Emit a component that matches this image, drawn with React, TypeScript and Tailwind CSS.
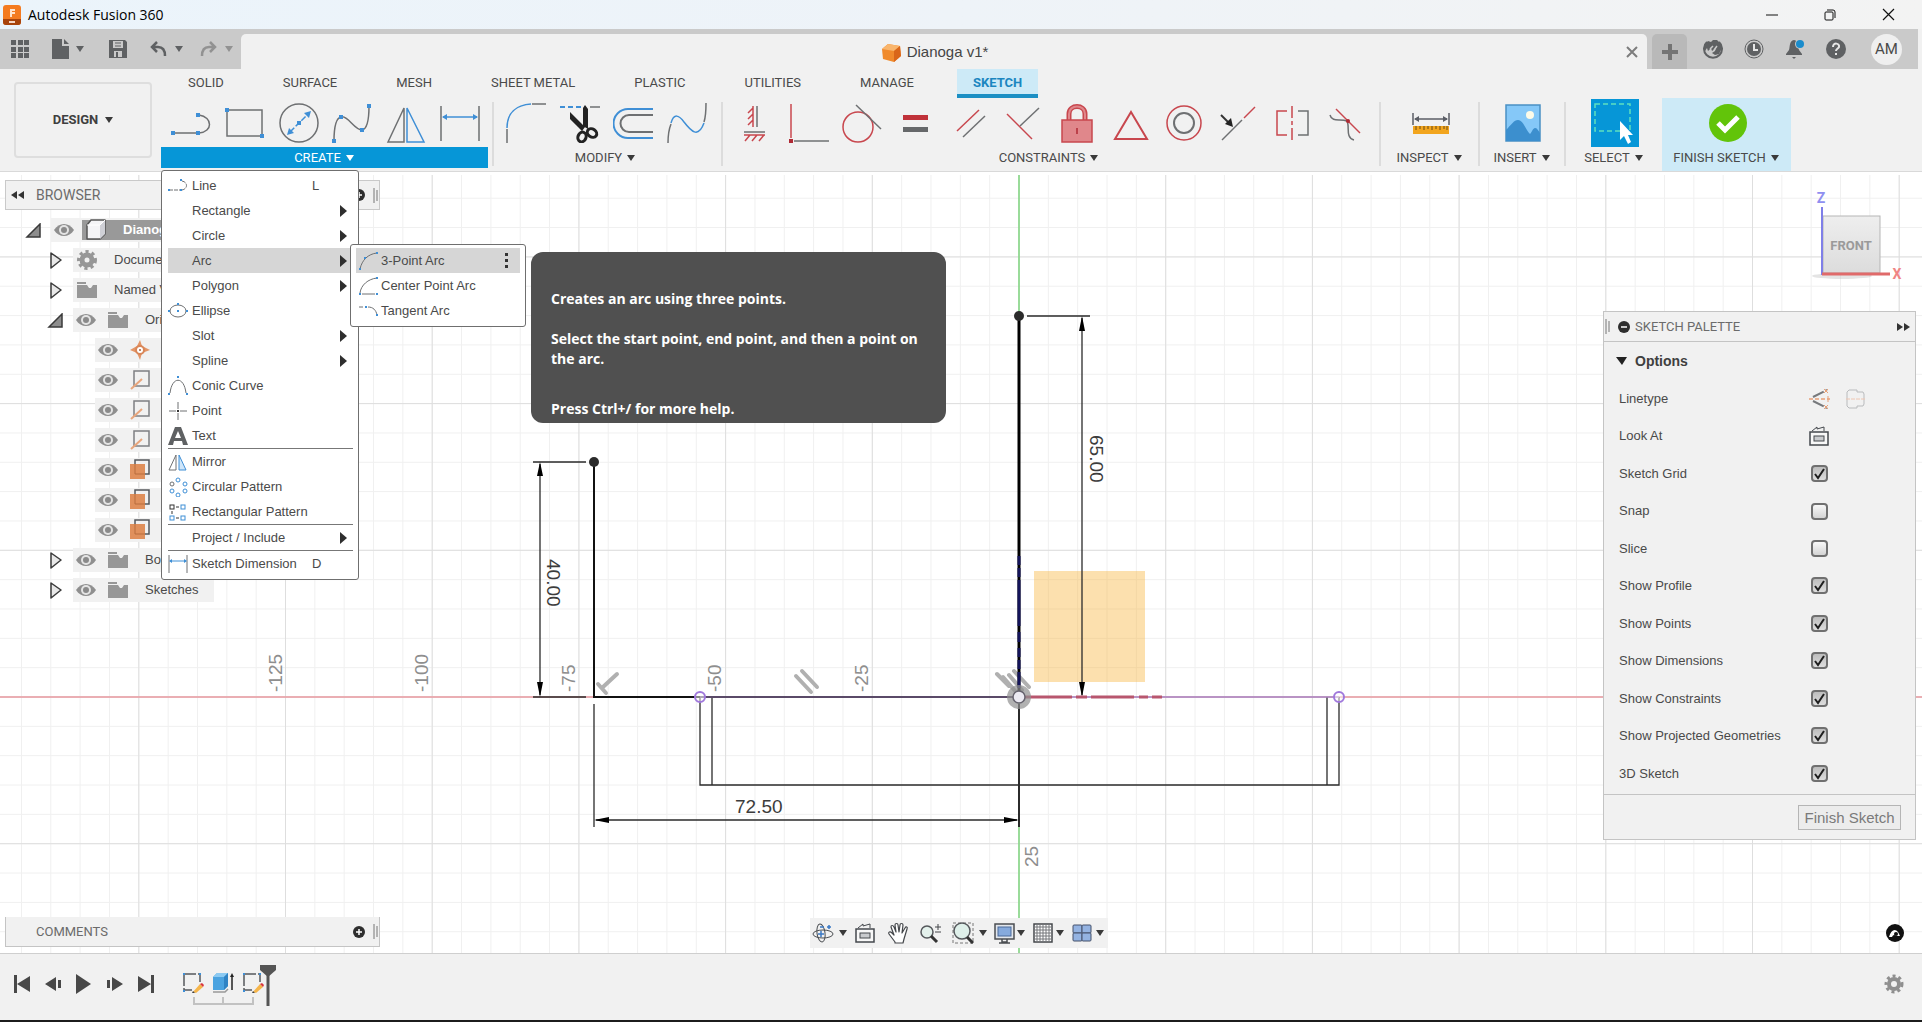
import { useState } from 'react';
import type { ReactNode } from 'react';
import clsx from 'clsx';

const BLUE = '#3f8fd6';
const GRAY = '#6e7072';
const RED = '#c8474e';

interface IconProps {
  size?: number;
  box?: number;
  children: ReactNode;
}

function Icon({ size = 40, box = 40, children }: IconProps) {
  return (
    <svg width={size} height={size} viewBox={`0 0 ${box} ${box}`} fill="none" className="shrink-0" aria-hidden="true">
      {children}
    </svg>
  );
}

function Caret({ className = 'text-[#3a3a3a]' }: { className?: string }) {
  return (
    <svg width="8" height="6" viewBox="0 0 8 6" className={clsx('shrink-0', className)} aria-hidden="true">
      <path d="M0 0H8L4 6Z" fill="currentColor" />
    </svg>
  );
}

function Dots({ points, r = 2 }: { points: number[][]; r?: number }) {
  return (
    <g fill={BLUE}>
      {points.map(([x, y]) => (
        <rect key={`${x}-${y}`} x={x - r} y={y - r} width={r * 2} height={r * 2} />
      ))}
    </g>
  );
}

// --- Ribbon icons ---

const createTools = [
  {
    name: 'Line',
    icon: (
      <Icon>
        <path d="M2 30H26M28 12C42 14 42 29 28 30" stroke={GRAY} strokeWidth="1.5" />
        <Dots points={[[2, 30], [27, 30], [27, 12]]} />
      </Icon>
    ),
  },
  {
    name: 'Rectangle',
    icon: (
      <Icon>
        <rect x="2" y="7" width="35" height="26" stroke={GRAY} strokeWidth="1.5" />
        <Dots points={[[2, 7], [37, 33]]} />
      </Icon>
    ),
  },
  {
    name: 'Circle',
    icon: (
      <Icon>
        <circle cx="20" cy="20" r="19" stroke={GRAY} strokeWidth="1.5" />
        <path d="M11 29L29 11" stroke={BLUE} strokeWidth="1.5" strokeDasharray="6 2" />
        <path d="M32 8L30 15L25 10ZM8 32L10 25L15 30Z" fill={BLUE} />
        <Dots points={[[20, 20]]} />
      </Icon>
    ),
  },
  {
    name: 'Spline',
    icon: (
      <Icon>
        <path d="M2 38C2 26 4 15 9 14C16 12 22 27 30 27C36 26 37 12 37 3" stroke={GRAY} strokeWidth="1.5" />
        <Dots points={[[2, 38], [9, 14], [30, 27], [37, 3]]} />
      </Icon>
    ),
  },
  {
    name: 'Mirror',
    icon: (
      <Icon>
        <path d="M2 39L18 5V39Z" stroke={GRAY} strokeWidth="1.5" />
        <path d="M21 5V39H38Z" stroke={BLUE} strokeWidth="1.5" />
      </Icon>
    ),
  },
  {
    name: 'Dimension',
    icon: (
      <Icon>
        <path d="M1 3V38M39 3V38" stroke={GRAY} strokeWidth="1.5" />
        <path d="M3 14H37" stroke={BLUE} strokeWidth="1.5" />
        <path d="M2 14L7 11V17ZM38 14L33 11V17Z" fill={BLUE} />
      </Icon>
    ),
  },
];

const modifyTools = [
  {
    name: 'Fillet',
    icon: (
      <Icon>
        <path d="M1 40V26M26 1H40" stroke={GRAY} strokeWidth="1.5" />
        <path d="M1 25C1 10 10 2 25 1" stroke={BLUE} strokeWidth="1.5" />
      </Icon>
    ),
  },
  {
    name: 'Trim',
    icon: (
      <Icon>
        <path d="M0 4H22" stroke={BLUE} strokeWidth="2" strokeDasharray="5 3" />
        <path d="M30 4H40" stroke={GRAY} strokeWidth="1.5" />
        <path d="M10 9L25 24L22 28L10 16ZM23 5L25 2L28 6V26L23 23Z" fill="#222" />
        <ellipse cx="22" cy="34" rx="4" ry="5" transform="rotate(20 22 34)" stroke="#222" strokeWidth="3" />
        <ellipse cx="32" cy="30" rx="5" ry="4" transform="rotate(35 32 30)" stroke="#222" strokeWidth="3" />
      </Icon>
    ),
  },
  {
    name: 'Offset',
    icon: (
      <Icon>
        <path d="M40 6H15A14 14 0 0 0 15 35H40" stroke={BLUE} strokeWidth="2" />
        <path d="M40 12H16A8 8 0 0 0 16 29H40" stroke={GRAY} strokeWidth="2" />
      </Icon>
    ),
  },
  {
    name: 'Edit spline',
    icon: (
      <Icon>
        <path d="M1 40C1 32 2 26 4 21M37 19C39 13 39 7 39 0" stroke={GRAY} strokeWidth="1.5" />
        <path d="M4 20C7 10 12 12 17 19C24 28 31 36 37 20" stroke={BLUE} strokeWidth="1.5" />
      </Icon>
    ),
  },
];

const constraintTools = [
  {
    name: 'Horizontal/Vertical',
    icon: (
      <Icon>
        <path d="M22 3V24M9 29H30" stroke={GRAY} strokeWidth="1.5" />
        <path d="M18 3V24M18 5L13 10M18 11L13 16M18 17L13 22M9 32H30M15 32L10 38M22 32L17 38M29 32L24 38" stroke={RED} strokeWidth="1.5" />
      </Icon>
    ),
  },
  {
    name: 'Coincident',
    icon: (
      <Icon>
        <path d="M2 1V35" stroke={RED} strokeWidth="1.5" />
        <path d="M5 38H40" stroke={GRAY} strokeWidth="1.5" />
        <rect x="0" y="36" width="4" height="4" fill="#b02a35" />
      </Icon>
    ),
  },
  {
    name: 'Tangent',
    icon: (
      <Icon>
        <circle cx="16" cy="24" r="15" stroke={RED} strokeWidth="1.5" />
        <path d="M14 2L39 26" stroke={GRAY} strokeWidth="1.5" />
      </Icon>
    ),
  },
  {
    name: 'Equal',
    icon: (
      <Icon>
        <rect x="7" y="12" width="25" height="5" fill="#c0323a" />
        <rect x="7" y="24" width="25" height="5" fill="#66686a" />
      </Icon>
    ),
  },
  {
    name: 'Parallel',
    icon: (
      <Icon>
        <path d="M7 28L29 7" stroke={RED} strokeWidth="1.5" />
        <path d="M13 34L35 13" stroke={GRAY} strokeWidth="1.5" />
      </Icon>
    ),
  },
  {
    name: 'Perpendicular',
    icon: (
      <Icon>
        <path d="M4 11L29 36" stroke={RED} strokeWidth="1.5" />
        <path d="M17 23L36 5" stroke={GRAY} strokeWidth="1.5" />
      </Icon>
    ),
  },
  {
    name: 'Fix',
    icon: (
      <Icon>
        <path d="M12 17V11C12 1 28 1 28 11V17" stroke="#c8474e" strokeWidth="5" />
        <path d="M12 17V11C12 1 28 1 28 11V17" stroke="#e0878b" strokeWidth="2" />
        <rect x="5" y="17" width="30" height="22" fill="#e0878b" stroke="#c8474e" strokeWidth="1.5" />
        <path d="M20 25V31" stroke="#b02a35" strokeWidth="1.5" />
      </Icon>
    ),
  },
  {
    name: 'Midpoint',
    icon: (
      <Icon>
        <path d="M20 9L36 36H4Z" stroke={RED} strokeWidth="2" />
      </Icon>
    ),
  },
  {
    name: 'Concentric',
    icon: (
      <Icon>
        <circle cx="20" cy="20" r="17" stroke={RED} strokeWidth="1.5" />
        <circle cx="20" cy="20" r="10" stroke={GRAY} strokeWidth="2" />
      </Icon>
    ),
  },
  {
    name: 'Collinear',
    icon: (
      <Icon>
        <path d="M4 37L24 17" stroke={GRAY} strokeWidth="1.5" />
        <path d="M26 15L37 4" stroke={RED} strokeWidth="1.5" />
        <path d="M3 12L11 20" stroke="#333" strokeWidth="2" />
        <path d="M15 24L7 21L13 15Z" fill="#222" />
      </Icon>
    ),
  },
  {
    name: 'Symmetry',
    icon: (
      <Icon>
        <path d="M15 8H5V32H15" stroke={RED} strokeWidth="1.5" />
        <path d="M20 3V37" stroke={RED} strokeWidth="1.5" strokeDasharray="12 3 4 3" />
        <path d="M26 8H36V32H26" stroke={GRAY} strokeWidth="1.5" />
      </Icon>
    ),
  },
  {
    name: 'Curvature',
    icon: (
      <Icon>
        <path d="M5 12C7 20 16 15 22 18C25 23 20 35 29 37" stroke={GRAY} strokeWidth="1.5" />
        <path d="M11 6L35 30" stroke={RED} strokeWidth="1.5" />
        <circle cx="23" cy="18" r="2" fill="#b02a35" />
      </Icon>
    ),
  },
];

const inspectTools = [
  {
    name: 'Measure',
    icon: (
      <Icon>
        <path d="M2 10V22M38 10V22M4 16H36" stroke="#5b5e66" strokeWidth="1.5" />
        <path d="M3 16L8 13V19ZM37 16L32 13V19Z" fill="#5b5e66" />
        <rect x="2" y="23" width="36" height="8" fill="#f2a51e" />
        <path d="M5 23V27M9 23V26M13 23V27M17 23V26M21 23V27M25 23V26M29 23V27M33 23V26M36 23V27" stroke="#6b4a10" strokeWidth="1" />
      </Icon>
    ),
  },
];

const insertTools = [
  {
    name: 'Insert image',
    icon: (
      <Icon>
        <rect x="3" y="2" width="34" height="36" fill="#85c8f8" stroke="#4a90c4" strokeWidth="1.5" />
        <path d="M3 27C8 22 11 17 15 17C20 17 23 27 27 31C29 29 30 25 32 25C34 25 35 27 37 30V38H3Z" fill="#3c8fce" />
        <circle cx="27" cy="12" r="4" fill="#fdfbe8" />
      </Icon>
    ),
  },
];

const selectTools = [
  {
    name: 'Select',
    icon: (
      <Icon size={48} box={48}>
        <rect width="48" height="48" fill="#0696d7" />
        <rect x="4" y="5" width="35" height="27" stroke="#5fe0c0" strokeWidth="1.5" strokeDasharray="5 3" />
        <path d="M29 22V41L33 37L37 45L40 43L37 36H42Z" fill="#fff" />
      </Icon>
    ),
  },
];

const finishTools = [
  {
    name: 'Finish sketch',
    icon: (
      <Icon>
        <circle cx="20" cy="20" r="19" fill="#62c40a" />
        <path d="M10 20L17 27L30 14" stroke="#fff" strokeWidth="5" />
      </Icon>
    ),
  },
];

interface Tool {
  name: string;
  icon: ReactNode;
}

interface RibbonGroupProps {
  label: string;
  tools: Tool[];
  className: string;
  labelClassName?: string;
  caretClassName?: string;
  children?: ReactNode;
}

function RibbonGroup({ label, tools, className, labelClassName, caretClassName, children }: RibbonGroupProps) {
  return (
    <div className={clsx('relative flex shrink-0 flex-col', className)}>
      <div className="flex h-[49px] items-center pr-px pl-[3px]">
        {tools.map(tool => (
          <button key={tool.name} type="button" aria-label={tool.name} className="flex min-w-0 flex-1 justify-center">
            {tool.icon}
          </button>
        ))}
      </div>
      <button type="button" className={clsx('flex h-[21px] items-center justify-center gap-[5px] pr-px text-[13px] whitespace-nowrap', labelClassName)}>
        {label}
        <Caret className={caretClassName} />
      </button>
      {children}
    </div>
  );
}

function Divider() {
  return <div className="mt-1 h-16 w-[2px] shrink-0 bg-[#dcdcdc]" />;
}

// --- Create menu ---

interface MenuItem {
  label: string;
  icon?: ReactNode;
  shortcut?: string;
  submenu?: boolean;
  active?: boolean;
}

const menuSections: MenuItem[][] = [
  [
    {
      label: 'Line',
      shortcut: 'L',
      icon: (
        <Icon size={20} box={20}>
          <path d="M1 14H12M14 5C20 6 20 13 14 14" stroke={GRAY} strokeDasharray="4 1" />
          <Dots r={1} points={[[1, 14], [13, 14], [13, 4]]} />
        </Icon>
      ),
    },
    { label: 'Rectangle', submenu: true },
    { label: 'Circle', submenu: true },
    { label: 'Arc', submenu: true, active: true },
    { label: 'Polygon', submenu: true },
    {
      label: 'Ellipse',
      icon: (
        <Icon size={20} box={20}>
          <ellipse cx="10" cy="10" rx="8" ry="6" stroke={GRAY} />
          <Dots r={1} points={[[10, 10], [10, 3], [19, 10], [1, 10]]} />
        </Icon>
      ),
    },
    { label: 'Slot', submenu: true },
    { label: 'Spline', submenu: true },
    {
      label: 'Conic Curve',
      icon: (
        <Icon size={20} box={20}>
          <path d="M2 17C4 0 16 0 18 17" stroke={GRAY} />
          <Dots r={1} points={[[1, 18], [19, 18], [10, 1]]} />
        </Icon>
      ),
    },
    {
      label: 'Point',
      icon: (
        <Icon size={20} box={20}>
          <path d="M1 10H8M12 10H19M10 1V8M10 12V19" stroke={GRAY} />
          <rect x="9" y="9" width="2" height="2" fill="#333" />
        </Icon>
      ),
    },
    {
      label: 'Text',
      icon: (
        <Icon size={20} box={20}>
          <path fillRule="evenodd" d="M7 1H13L20 19H15L14 15H6L5 19H0ZM10 5L7 12H13Z" fill="#5f6163" />
        </Icon>
      ),
    },
  ],
  [
    {
      label: 'Mirror',
      icon: (
        <Icon size={20} box={20}>
          <path d="M1 18L8 3V18Z" stroke={GRAY} />
          <path d="M11 3V18H18Z" stroke={BLUE} fill="#cfe6fa" />
        </Icon>
      ),
    },
    {
      label: 'Circular Pattern',
      icon: (
        <Icon size={20} box={20}>
          <g stroke={BLUE}>
            <circle cx="10" cy="3" r="2" />
            <circle cx="10" cy="18" r="2" />
            <circle cx="17" cy="7" r="2" />
            <circle cx="17" cy="14" r="2" />
            <circle cx="4" cy="14" r="2" />
          </g>
          <circle cx="4" cy="7" r="2" stroke={GRAY} />
        </Icon>
      ),
    },
    {
      label: 'Rectangular Pattern',
      icon: (
        <Icon size={20} box={20}>
          <rect x="2" y="3" width="4" height="4" stroke="#333" />
          <g stroke={BLUE}>
            <rect x="13" y="3" width="4" height="4" />
            <rect x="2" y="14" width="4" height="4" />
            <rect x="13" y="14" width="4" height="4" />
          </g>
          <path d="M8 5H11M8 16H11M4 9V12" stroke="#333" />
        </Icon>
      ),
    },
  ],
  [{ label: 'Project / Include', submenu: true }],
  [
    {
      label: 'Sketch Dimension',
      shortcut: 'D',
      icon: (
        <Icon size={20} box={20}>
          <path d="M1 1V19M19 1V19" stroke={GRAY} />
          <path d="M2 7H18" stroke={BLUE} />
          <path d="M1 7L4 5V9ZM19 7L16 5V9Z" fill={BLUE} />
        </Icon>
      ),
    },
  ],
];

const arcItems: MenuItem[] = [
  {
    label: '3-Point Arc',
    active: true,
    icon: (
      <Icon size={20} box={20}>
        <path d="M1 18C3 9 9 3 18 2" stroke={GRAY} />
        <Dots r={1} points={[[1, 18], [6, 7], [18, 2]]} />
      </Icon>
    ),
  },
  {
    label: 'Center Point Arc',
    icon: (
      <Icon size={20} box={20}>
        <path d="M1 17C2 9 9 3 18 2M3 18H16" stroke={GRAY} />
        <Dots r={1} points={[[1, 18], [18, 18], [18, 2]]} />
      </Icon>
    ),
  },
  {
    label: 'Tangent Arc',
    icon: (
      <Icon size={20} box={20}>
        <path d="M0 6H4M9 6C14 6 17 9 18 14" stroke={GRAY} />
        <Dots r={1} points={[[7, 6], [18, 14]]} />
      </Icon>
    ),
  },
];

function ArcTooltip() {
  return (
    <div
      role="tooltip"
      className="absolute top-[7px] left-[180px] w-[415px] rounded-xl bg-[#505050] px-5 pt-[37px] pb-1 font-['Open_Sans',sans-serif] text-[14px] leading-5 font-bold text-white"
    >
      <p>Creates an arc using three points.</p>
      <p className="mt-5">Select the start point, end point, and then a point on the arc.</p>
      <p className="mt-[30px]">Press Ctrl+/ for more help.</p>
    </div>
  );
}

function ArcSubmenu() {
  return (
    <div role="menu" aria-label="Arc" className="absolute -top-1 left-[182px] z-10 w-[176px] rounded-[3px] border border-[#6f6f6f] bg-white px-[5px] py-[3px]">
      {arcItems.map(item => (
        <button key={item.label} type="button" role="menuitem" className={clsx('flex h-[25px] w-full items-center gap-[2px] pl-[3px]', item.active && 'bg-[#d6d6d6]')}>
          {item.icon}
          <span>{item.label}</span>
          {item.active && (
            <svg width="4" height="16" viewBox="0 0 4 16" className="mr-[11px] ml-auto" aria-hidden="true">
              <path d="M0 0H3V3H0ZM0 6H3V9H0ZM0 12H3V15H0Z" fill="#333" />
            </svg>
          )}
        </button>
      ))}
      <ArcTooltip />
    </div>
  );
}

function CreateMenu() {
  return (
    <div role="menu" aria-label="Create" className="absolute top-[72px] left-0 z-20 w-[198px] rounded-[3px] border border-[#6f6f6f] bg-white pt-[2px] pb-[3px] text-[13px] text-[#4a4a4a]">
      {menuSections.map((section, index) => (
        <div key={section[0].label} className={clsx('ml-[6px]', index > 0 && 'border-t border-transparent')}>
          {index > 0 && <div className="-mt-px mr-[5px] h-px bg-[#777]" />}
          {section.map(item => (
            <div key={item.label} className="relative">
              <button type="button" role="menuitem" className={clsx('flex h-[25px] w-full items-center', item.active && 'bg-[#d6d6d6]')}>
                <span className="flex w-6 shrink-0">{item.icon}</span>
                <span className="flex-1 text-left">{item.label}</span>
                {item.shortcut && <span className="w-[46px] text-left">{item.shortcut}</span>}
                {item.submenu && (
                  <svg width="7" height="12" viewBox="0 0 7 12" className="mr-[11px]" aria-hidden="true">
                    <path d="M0 0L7 6L0 12Z" fill="#2e2e2e" />
                  </svg>
                )}
              </button>
              {item.active && <ArcSubmenu />}
            </div>
          ))}
        </div>
      ))}
    </div>
  );
}

// --- Title bar and document tabs ---

function TitleBar() {
  return (
    <header className="flex h-[29px] items-center bg-linear-to-r from-[#ebf4fb] via-[#eef3f8] to-[#f3f3f3] pl-[3px] font-['Open_Sans',sans-serif]">
      <svg width="18" height="20" viewBox="0 0 18 20" aria-hidden="true">
        <rect width="18" height="20" rx="3" fill="#f47b20" />
        <path d="M0 14H18V17A3 3 0 0 1 15 20H3A3 3 0 0 1 0 17Z" fill="#a8440c" />
        <path d="M7 4H12V6H9V7H12V9H9V12H7Z" fill="#ffe3cc" />
        <path d="M6 17H12" stroke="#f7d7c4" strokeWidth="2" />
      </svg>
      <h1 className="ml-[7px] text-[14px] text-black">Autodesk Fusion 360</h1>
      <div className="ml-auto flex items-center pr-[5px]">
        <button type="button" aria-label="Minimize" className="flex w-[58px] justify-center">
          <svg width="12" height="12" viewBox="0 0 12 12"><path d="M0 6H12" stroke="#111" /></svg>
        </button>
        <button type="button" aria-label="Restore" className="flex w-[58px] justify-center">
          <svg width="12" height="12" viewBox="0 0 12 12" fill="none" stroke="#111">
            <rect x="1" y="3" width="8" height="8" rx="1" />
            <path d="M3 1H9A2 2 0 0 1 11 3V9" />
          </svg>
        </button>
        <button type="button" aria-label="Close" className="flex w-[58px] justify-center">
          <svg width="13" height="13" viewBox="0 0 13 13"><path d="M1 1L12 12M12 1L1 12" stroke="#111" strokeWidth="1.2" /></svg>
        </button>
      </div>
    </header>
  );
}

function DocumentBar() {
  return (
    <div className="mr-1 flex h-10 bg-[#cacaca] text-[#5f6163]">
      <div className="flex w-[241px] shrink-0 items-center pl-[11px]">
        <button type="button" aria-label="Show data panel">
          <Icon size={18} box={18}>
            <path d="M0 0H5V5H0ZM7 0H12V5H7ZM13 0H18V5H13ZM0 7H5V12H0ZM7 7H12V12H7ZM13 7H18V12H13ZM0 13H5V18H0ZM7 13H12V18H7ZM13 13H18V18H13Z" fill="currentColor" />
          </Icon>
        </button>
        <button type="button" aria-label="File" className="ml-[23px] flex items-center gap-[7px]">
          <svg width="17" height="20" viewBox="0 0 17 20"><path d="M0 0H10V7H17V20H0ZM12 0L17 5H12Z" fill="currentColor" /></svg>
          <Caret className="text-[#5f6163]" />
        </button>
        <button type="button" aria-label="Save" className="ml-[25px]">
          <svg width="18" height="18" viewBox="0 0 18 18">
            <path fillRule="evenodd" d="M0 0H16L18 2V18H0ZM4 1V8H14V1ZM5 11V17H13V11Z" fill="currentColor" />
            <path d="M6 3H12M6 6H12" stroke="currentColor" />
            <path d="M7 12H9V17H7Z" fill="currentColor" />
          </svg>
        </button>
        <button type="button" aria-label="Undo" className="ml-[23px] flex items-center gap-2">
          <svg width="17" height="16" viewBox="0 0 17 16" fill="none" stroke="currentColor" strokeWidth="2.5"><path d="M7 1L2 6L7 11M2 6H8C13 6 15 9 15 15" /></svg>
          <Caret className="text-[#5f6163]" />
        </button>
        <button type="button" aria-label="Redo" className="ml-[17px] flex items-center gap-2 text-[#929292]">
          <svg width="17" height="16" viewBox="0 0 17 16" fill="none" stroke="currentColor" strokeWidth="2.5"><path d="M10 1L15 6L10 11M15 6H9C4 6 2 9 2 15" /></svg>
          <Caret className="text-[#929292]" />
        </button>
      </div>
      <div className="mt-[5px] flex flex-1 items-center rounded-t-[5px] bg-[#f1f1f1] pr-[9px]">
        <div className="flex flex-1 items-center justify-center gap-[6px] pt-[2px] pl-[3px] text-[15px] text-[#454545]">
          <svg width="19" height="20" viewBox="0 0 19 20" aria-hidden="true">
            <path d="M6 1L18 3L19 13L12 19L1 16L0 6Z" fill="#f08a2c" />
            <path d="M6 1L18 3L12 8L0 6Z" fill="#f9b56c" />
            <path d="M18 3L19 13L12 19V8Z" fill="#d9661a" />
          </svg>
          <span>Dianoga v1*</span>
        </div>
        <button type="button" aria-label="Close tab">
          <svg width="12" height="12" viewBox="0 0 12 12"><path d="M1 1L11 11M11 1L1 11" stroke="#7d7d7d" strokeWidth="2" /></svg>
        </button>
      </div>
      <button type="button" aria-label="New design" className="mt-[5px] ml-[5px] flex w-[35px] items-center justify-center rounded-t-[5px] bg-[#b9b9b9]">
        <svg width="16" height="16" viewBox="0 0 16 16"><path d="M8 0V16M0 8H16" stroke="#747474" strokeWidth="4" /></svg>
      </button>
      <div className="flex items-center gap-[21px] pr-4 pl-4">
        <button type="button" aria-label="Extensions">
          <Icon size={20} box={20}>
            <path d="M4 3A9 9 0 1 0 16 3" stroke="currentColor" strokeWidth="2" />
            <path d="M1 6L5 2L8 3L10 1H14L18 5V11L16 15L12 16L9 14L12 12L13 9L9 12L8 9L5 12L4 9L2 12Z" fill="currentColor" />
            <path d="M7 10L10 7M11 11L14 7" stroke="#cacaca" strokeWidth="1.5" />
          </Icon>
        </button>
        <button type="button" aria-label="Job status">
          <Icon size={20} box={20}>
            <circle cx="10" cy="10" r="9" stroke="currentColor" />
            <circle cx="10" cy="10" r="7" fill="currentColor" />
            <path d="M10 5V11H14" stroke="#e6e6e6" strokeWidth="2" />
          </Icon>
        </button>
        <button type="button" aria-label="Notifications">
          <Icon size={20} box={20}>
            <path d="M9 1C4 2 5 8 4 11L1 15V16H17V15L14 11C13 8 14 2 9 1ZM7 18H11L9 20Z" fill="currentColor" />
            <circle cx="15" cy="5" r="5" fill="#cacaca" />
            <circle cx="15" cy="5" r="4" fill="#1a8ccc" />
          </Icon>
        </button>
        <button type="button" aria-label="Help">
          <Icon size={20} box={20}>
            <circle cx="10" cy="10" r="10" fill="currentColor" />
            <path d="M7 8C7 3 14 4 13 8C12 10 10 10 10 12M10 14V16" stroke="#e6e6e6" strokeWidth="2" />
          </Icon>
        </button>
        <button type="button" className="ml-1 flex size-[31px] items-center justify-center rounded-full bg-[#efefef] font-['Roboto',sans-serif] text-[15px] text-[#4a4a4a]">AM</button>
      </div>
    </div>
  );
}

const ribbonTabs = ['SOLID', 'SURFACE', 'MESH', 'SHEET METAL', 'PLASTIC', 'UTILITIES', 'MANAGE', 'SKETCH'];

function Ribbon() {
  return (
    <div className="relative z-20 flex h-[103px] border-b border-[#d9d9d9] font-['Roboto',sans-serif] text-[#4a4a4a]">
      <div className="w-[161px] shrink-0 py-[13px] pr-[9px] pl-[14px]">
        <button type="button" className="flex h-[76px] w-full items-center justify-center gap-[7px] rounded border-2 border-[#dedede] text-[13px] font-bold text-[#3f3f3f]">
          DESIGN
          <Caret />
        </button>
      </div>
      <div className="flex flex-col">
        <nav className="flex h-[29px] gap-[27px] pl-[11px]">
          {ribbonTabs.map(tab => (
            <button
              key={tab}
              type="button"
              className={clsx(
                'px-4 text-[13px] whitespace-nowrap',
                tab === 'SKETCH' ? 'border-b-4 border-[#1b8fc4] bg-[#cdeaf7] pt-[2px] font-bold text-[#1b86c0]' : 'pb-[2px]',
              )}
            >
              {tab}
            </button>
          ))}
        </nav>
        <div className="flex flex-1">
          <RibbonGroup label="CREATE" tools={createTools} className="w-[327px]" labelClassName="bg-[#0696d7] text-white" caretClassName="text-white">
            <div className="font-['Liberation_Sans',Arial,sans-serif]">
              <CreateMenu />
            </div>
          </RibbonGroup>
          <div className="w-1" />
          <Divider />
          <RibbonGroup label="MODIFY" tools={modifyTools} className="w-[227px] pr-[6px] pl-[2px]" />
          <Divider />
          <RibbonGroup label="CONSTRAINTS" tools={constraintTools} className="w-[656px] pr-[6px] pl-[2px]" />
          <Divider />
          <RibbonGroup label="INSPECT" tools={inspectTools} className="w-[97px]" />
          <Divider />
          <RibbonGroup label="INSERT" tools={insertTools} className="w-[84px]" />
          <Divider />
          <RibbonGroup label="SELECT" tools={selectTools} className="w-[96px]" />
          <RibbonGroup label="FINISH SKETCH" tools={finishTools} className="w-[129px] bg-[#cdeaf7]" />
        </div>
      </div>
    </div>
  );
}

// --- Browser tree ---

type NodeKind = 'component' | 'settings' | 'folder' | 'point' | 'axis' | 'plane';

interface TreeNode {
  label: string;
  level: number;
  kind: NodeKind;
  expanded?: boolean;
  eye?: boolean;
}

const treeNodes: TreeNode[] = [
  { label: 'Dianoga', level: 0, kind: 'component', expanded: true, eye: true },
  { label: 'Document', level: 1, kind: 'settings', expanded: false },
  { label: 'Named Views', level: 1, kind: 'folder', expanded: false },
  { label: 'Origin', level: 1, kind: 'folder', expanded: true, eye: true },
  { label: 'O', level: 2, kind: 'point', eye: true },
  { label: 'X', level: 2, kind: 'axis', eye: true },
  { label: 'Y', level: 2, kind: 'axis', eye: true },
  { label: 'Z', level: 2, kind: 'axis', eye: true },
  { label: 'XY', level: 2, kind: 'plane', eye: true },
  { label: 'XZ', level: 2, kind: 'plane', eye: true },
  { label: 'YZ', level: 2, kind: 'plane', eye: true },
  { label: 'Bodies', level: 1, kind: 'folder', expanded: false, eye: true },
  { label: 'Sketches', level: 1, kind: 'folder', expanded: false, eye: true },
];

function NodeIcon({ kind }: { kind: NodeKind }) {
  switch (kind) {
    case 'component':
      return (
        <Icon size={22} box={22}>
          <path d="M2 6L6 1H20V15L15 20H2Z" fill="#f4f4f6" stroke="#555" strokeWidth="1.5" strokeLinejoin="round" />
          <path d="M15 6V20L20 15V1Z" fill="#cfd0d6" />
          <path d="M2 6H15L20 1" stroke="#fff" />
        </Icon>
      );
    case 'settings':
      return (
        <Icon size={22} box={22}>
          <circle cx="11" cy="11" r="5" stroke="#979797" strokeWidth="5" />
          <circle cx="11" cy="11" r="8" stroke="#979797" strokeWidth="4" strokeDasharray="3 3" />
        </Icon>
      );
    case 'folder':
      return (
        <Icon size={22} box={22}>
          <path d="M1 6H11L13 9H15L17 6H21V19H1ZM1 3H10V5H1Z" fill="#979797" />
        </Icon>
      );
    case 'point':
      return (
        <Icon size={22} box={22}>
          <path d="M11 1L13 7L21 11L13 14L11 21L8 14L1 11L8 7Z" fill="#e39566" />
          <circle cx="11" cy="11" r="4" fill="#fff" stroke="#d98658" strokeWidth="2" />
          <circle cx="11" cy="11" r="1" fill="#a06040" />
        </Icon>
      );
    case 'axis':
      return (
        <Icon size={22} box={22}>
          <rect x="5" y="2" width="15" height="15" stroke="#7d7f82" strokeWidth="1.5" />
          <path d="M2 20L13 10" stroke="#e8a67c" strokeWidth="2" />
        </Icon>
      );
    case 'plane':
      return (
        <Icon size={22} box={22}>
          <path d="M6 6V1H20V15H16" stroke="#55585c" strokeWidth="1.5" />
          <rect x="1" y="5" width="15" height="15" fill="#e0905c" />
          <path d="M6 5V15H16" stroke="#b86c3c" />
        </Icon>
      );
  }
}

function EyeIcon() {
  return (
    <svg width="20" height="14" viewBox="0 0 20 14" className="shrink-0" aria-hidden="true">
      <path d="M0 7C5 -1 15 -1 20 7C15 15 5 15 0 7Z" fill="#8f8f8f" />
      <circle cx="10" cy="7" r="5" fill="#e4e4e4" />
      <circle cx="10" cy="7" r="3" fill="#8a8a8a" />
    </svg>
  );
}

const indents = ['pl-[20px]', 'pl-[42px]', 'pl-[64px]'];

function TreeRow({ node }: { node: TreeNode }) {
  const isRoot = node.kind === 'component';
  return (
    <li className={clsx('flex h-[30px] items-center', indents[node.level])}>
      <span className="flex w-[26px] shrink-0 justify-start">
        {node.expanded === true && (
          <svg width="16" height="15" viewBox="0 0 16 15"><path d="M15 1V14H2Z" fill="#8d8d8d" stroke="#3a3a3a" strokeWidth="1.5" /></svg>
        )}
        {node.expanded === false && (
          <svg width="15" height="17" viewBox="0 0 15 17"><path d="M4 1L14 8L4 16Z" fill="#e8e8e8" stroke="#3a3a3a" strokeWidth="1.5" strokeLinejoin="round" /></svg>
        )}
      </span>
      <span className={clsx('flex h-6 items-center bg-[#f1f1f1] pl-[3px]', !isRoot && 'pr-4')}>
        {node.eye && <span className={clsx('flex', isRoot ? 'mr-2' : 'mr-[11px]')}><EyeIcon /></span>}
        <span className={clsx('flex items-center whitespace-nowrap', isRoot && 'h-5 bg-[#999] pr-5 pl-[3px] font-bold text-white')}>
          <NodeIcon kind={node.kind} />
          <span className="ml-4">{node.label}</span>
        </span>
      </span>
    </li>
  );
}

function Grip() {
  return (
    <svg width="5" height="15" viewBox="0 0 5 15" aria-hidden="true"><path d="M1 0V15M4 2V13" stroke="#777" /></svg>
  );
}

function RoundToggle({ plus = false }: { plus?: boolean }) {
  return (
    <Icon size={12} box={12}>
      <circle cx="6" cy="6" r="6" fill="#2e2e2e" />
      <path d={plus ? 'M3 6H9M6 3V9' : 'M3 6H9'} stroke="#fff" strokeWidth="1.5" />
    </Icon>
  );
}

function BrowserPanel() {
  return (
    <aside className="w-[375px] text-[13px] text-[#4a4a4a]">
      <div className="flex h-[30px] items-center border border-[#c9c9c9] bg-[#f1f1f1] pr-px pl-[5px]">
        <button type="button" aria-label="Collapse browser">
          <svg width="13" height="8" viewBox="0 0 13 8"><path d="M6 0V8L0 4ZM13 0V8L7 4Z" fill="#333" /></svg>
        </button>
        <h2 className="ml-3 font-['Roboto',sans-serif] text-[14px] text-[#6b6b6b]">BROWSER</h2>
        <button type="button" aria-label="Browser options" className="mr-2 ml-auto"><RoundToggle plus /></button>
        <Grip />
      </div>
      <ul className="mt-[5px]">
        {treeNodes.map(node => <TreeRow key={node.label} node={node} />)}
      </ul>
    </aside>
  );
}

// --- Sketch canvas ---

const majorX = Array.from({ length: 14 }, (_, i) => 1019 + (i - 7) * 146.7);
const minorX = Array.from({ length: 68 }, (_, i) => 1019 + (i - 35) * 29.34);
const majorY = Array.from({ length: 6 }, (_, i) => 697 + (i - 4) * 146.7);
const minorY = Array.from({ length: 28 }, (_, i) => 697 + (i - 18) * 29.34);

const gridLabels = [
  { text: '-125', x: 282, y: 692 },
  { text: '-100', x: 428, y: 692 },
  { text: '-75', x: 575, y: 692 },
  { text: '-50', x: 721, y: 692 },
  { text: '-25', x: 868, y: 692 },
  { text: '25', x: 1038, y: 867 },
];

function SketchCanvas() {
  return (
    <svg viewBox="0 172 1922 781" preserveAspectRatio="xMidYMid slice" className="absolute inset-0 h-full w-full font-['Liberation_Sans',Arial,sans-serif]" role="img" aria-label="Sketch">
      <g stroke="#f0f0f0">
        {minorX.map(x => <path key={x} d={`M${x} 175V953`} />)}
        {minorY.map(y => <path key={y} d={`M0 ${y}H1922`} />)}
      </g>
      <g stroke="#dedede">
        {majorX.map(x => <path key={x} d={`M${x} 175V953`} />)}
        {majorY.map(y => <path key={y} d={`M0 ${y}H1922`} />)}
      </g>

      <path d="M0 697H1922" stroke="#ea9aa0" strokeWidth="1.5" />
      <path d="M1019 175V953" stroke="#7fd67f" strokeWidth="1.5" />
      <rect x="1034" y="571" width="111" height="111" fill="#f7a91e" fillOpacity="0.36" />

      <g fontSize="19" fill="#8e8e8e">
        {gridLabels.map(label => (
          <text key={label.text} transform={`translate(${label.x} ${label.y}) rotate(-90)`}>{label.text}</text>
        ))}
      </g>

      {/* profile body below the X axis */}
      <path d="M700 697V785H1339V697M712 697V785M1327 697V785" stroke="#2b2b2b" strokeWidth="1.3" fill="none" />
      <path d="M700 697H1339" stroke="#a88aca" strokeWidth="1.5" />

      {/* dimensions */}
      <g stroke="#2b2b2b" strokeWidth="1.3">
        <path d="M540 464V695M533 462H586M533 697H586" />
        <path d="M1082 318V695M1027 316H1090" />
        <path d="M596 820H1017M594 704V827" />
        <path d="M1019 704V827" strokeWidth="2" />
      </g>
      <path d="M540 462L543 476H537ZM540 697L543 682H537ZM1082 316L1085 331H1079ZM1082 697L1085 682H1079ZM594 820L609 817V823ZM1019 820L1004 817V823Z" fill="#000" />
      <g fontSize="19" fill="#3c3c3c">
        <text transform="translate(547 559) rotate(90)">40.00</text>
        <text transform="translate(1090 435) rotate(90)">65.00</text>
        <text x="735" y="813">72.50</text>
      </g>

      {/* constraint glyphs */}
      <g stroke="#b0b0b0" strokeWidth="4" strokeLinecap="round">
        <path d="M598 684L606 693M617 674L603 687" />
        <path d="M802 671L817 687M796 676L811 692" />
        <path d="M997 674L1009 686M1014 671L1029 687M1009 675L1022 690M1003 677L1016 692" />
      </g>

      <path d="M594 462V697H1019" stroke="#111" strokeWidth="2" fill="none" />
      <path d="M700 697H1019" stroke="#5a4a68" strokeWidth="2" />
      <path d="M1019 316V697" stroke="#000" strokeWidth="3" />
      <path d="M1019 556V688" stroke="#14145a" strokeWidth="3" strokeDasharray="9 3 9 3 46 6 10 6" />
      <path d="M1019 697H1072M1076 697H1087M1091 697H1134M1139 697H1148M1152 697H1162" stroke="#b8566e" strokeWidth="3" />
      <circle cx="594" cy="462" r="5" fill="#2b2b2b" />
      <circle cx="1019" cy="316" r="5" fill="#2b2b2b" />
      <circle cx="1019" cy="697" r="9" fill="none" stroke="#909090" strokeOpacity="0.7" strokeWidth="6" />
      <circle cx="1019" cy="697" r="6" fill="#eceaf2" stroke="#66636e" strokeWidth="1.5" />
      <circle cx="700" cy="697" r="5" fill="#fff" fillOpacity="0.5" stroke="#a078dc" strokeWidth="2" />
      <circle cx="1339" cy="697" r="5" fill="#fff" fillOpacity="0.5" stroke="#a078dc" strokeWidth="2" />
    </svg>
  );
}

function ViewCube() {
  return (
    <svg width="94" height="100" viewBox="1810 185 94 100" className="font-['Roboto',sans-serif]" role="img" aria-label="View cube">
      <defs>
        <linearGradient id="cube" x1="0" y1="0" x2="0" y2="1">
          <stop offset="0" stopColor="#eeeeee" />
          <stop offset="1" stopColor="#dcdcdc" />
        </linearGradient>
      </defs>
      <ellipse cx="1842" cy="276" rx="30" ry="3" fill="#bbb" fillOpacity="0.4" />
      <rect x="1823" y="216" width="57" height="57" fill="url(#cube)" stroke="#b5b5b5" />
      <path d="M1822 207V275" stroke="#7f7fe8" strokeWidth="2" />
      <path d="M1822 274H1890" stroke="#e06a6a" strokeWidth="3" />
      <text x="1851" y="250" textAnchor="middle" fontSize="13" fontWeight="bold" fill="#9a9a9a">FRONT</text>
      <text x="1821" y="203" textAnchor="middle" fontSize="14" fontWeight="bold" fill="#8f8ff0">Z</text>
      <text x="1897" y="279" textAnchor="middle" fontSize="14" fontWeight="bold" fill="#f08484">X</text>
    </svg>
  );
}

// --- Sketch palette ---

const paletteOptions = [
  { id: 'grid', label: 'Sketch Grid', checked: true },
  { id: 'snap', label: 'Snap', checked: false },
  { id: 'slice', label: 'Slice', checked: false },
  { id: 'profile', label: 'Show Profile', checked: true },
  { id: 'points', label: 'Show Points', checked: true },
  { id: 'dimensions', label: 'Show Dimensions', checked: true },
  { id: 'constraints', label: 'Show Constraints', checked: true },
  { id: 'projected', label: 'Show Projected Geometries', checked: true },
  { id: 'sketch3d', label: '3D Sketch', checked: true },
];

function LookAtIcon() {
  return (
    <Icon size={20} box={20}>
      <rect x="1" y="6" width="18" height="13" fill="#f8f8f8" stroke="#44484d" strokeWidth="1.5" />
      <rect x="5" y="10" width="10" height="5" fill="#c9cbce" stroke="#44484d" />
      <path d="M3 5L8 1V3L15 1V5" stroke="#44484d" />
    </Icon>
  );
}

function SketchPalette() {
  const [options, setOptions] = useState(paletteOptions);

  const toggle = (id: string) => {
    setOptions(options.map(option => (option.id === id ? { ...option, checked: !option.checked } : option)));
  };

  return (
    <aside className="w-[313px] border border-[#c4c4c4] bg-[#f1f1f1] text-[13px] text-[#4a4a4a]">
      <div className="flex h-[30px] items-center border-b border-[#c4c4c4] pr-[5px] pl-px">
        <Grip />
        <button type="button" aria-label="Collapse palette" className="mr-[5px] ml-2"><RoundToggle /></button>
        <h2 className="font-['Roboto',sans-serif] text-[#6b6b6b]">SKETCH PALETTE</h2>
        <button type="button" aria-label="Dock palette" className="ml-auto">
          <svg width="13" height="8" viewBox="0 0 13 8"><path d="M0 0V8L6 4ZM7 0V8L13 4Z" fill="#333" /></svg>
        </button>
      </div>
      <button type="button" className="flex h-[38px] items-center gap-2 pl-3 text-[14px] font-bold text-[#3f3f3f]">
        <svg width="11" height="8" viewBox="0 0 11 8"><path d="M0 0H11L6 8Z" fill="#222" /></svg>
        Options
      </button>
      <div className="mb-[2px] grid h-[412px] auto-rows-fr pl-[15px]">
        <div className="flex items-center">
          <span className="w-[190px]">Linetype</span>
          <button type="button" aria-label="Construction" className="mr-[15px]">
            <Icon size={22} box={22}>
              <path d="M4 9L18 2M4 13L18 20" stroke="#77797c" strokeWidth="2" strokeDasharray="12 2 3" />
              <path d="M0 11H21" stroke="#e8a078" strokeWidth="1.5" strokeDasharray="4 2" />
              <path d="M15 1L19 5M19 1L15 5M15 17L19 21M19 17L15 21M19 8V14" stroke="#e8a078" />
            </Icon>
          </button>
          <button type="button" aria-label="Centerline">
            <Icon size={20} box={20}>
              <path d="M3 1H11V3H17L18 5V15L17 17H11V19H3L1 17V3Z" stroke="#b9bbbd" />
              <path d="M0 10H20" stroke="#efc6b2" strokeDasharray="4 1" />
            </Icon>
          </button>
        </div>
        <div className="flex items-center">
          <span className="w-[190px]">Look At</span>
          <button type="button" aria-label="Look at"><LookAtIcon /></button>
        </div>
        {options.map(option => (
          <div key={option.id} className="flex items-center">
            <label htmlFor={option.id} className="w-[192px]">{option.label}</label>
            <span className="relative flex">
              <input
                id={option.id}
                type="checkbox"
                checked={option.checked}
                onChange={() => toggle(option.id)}
                className="size-[17px] appearance-none rounded-[4px] border-2 border-[#707070] bg-linear-to-b from-[#f8f8f8] to-[#d4d4d4] checked:from-[#bdbdbd] checked:to-[#dedede]"
              />
              {option.checked && (
                <svg viewBox="0 0 17 17" className="pointer-events-none absolute inset-0" aria-hidden="true">
                  <path d="M4 9L7 13L13 4" stroke="#1f1f1f" strokeWidth="2" fill="none" />
                </svg>
              )}
            </span>
          </div>
        ))}
      </div>
      <div className="flex justify-end border-t border-[#c4c4c4] pt-[10px] pr-[14px] pb-[9px]">
        <button type="button" className="h-[25px] w-[103px] border border-[#b5b5b5] bg-[#ececec] text-[15px] leading-[23px] whitespace-nowrap text-[#7a7a7a]">Finish Sketch</button>
      </div>
    </aside>
  );
}

// --- Navigation bar ---

function NavigationBar() {
  return (
    <div className="flex h-[30px] items-center bg-[#f1f1f1] pr-1 pl-[2px]">
      <button type="button" aria-label="Orbit" className="flex items-center gap-[5px]">
        <Icon size={22} box={22}>
          <ellipse cx="11" cy="12" rx="10" ry="4" stroke="#4b4e52" />
          <ellipse cx="9" cy="11" rx="4" ry="9" stroke="#4b4e52" transform="rotate(-8 9 11)" />
          <path d="M6 12H12M9 9V15M15 5H19M17 3V7M8 5H12" stroke="#3a78c4" strokeWidth="1.5" />
        </Icon>
        <Caret />
      </button>
      <button type="button" aria-label="Look at" className="ml-[8px]"><LookAtIcon /></button>
      <button type="button" aria-label="Pan" className="ml-[12px]">
        <Icon size={22} box={22}>
          <path d="M8 20L2 12C1 10 3 9 5 11L7 13L4 5C4 3 6 3 7 5L9 10L8 3C8 1 11 1 11 3L12 10L13 3C13 1 16 1 16 3L15 11L18 6C19 4 21 5 20 7L17 17L16 21H8Z" fill="#fff" stroke="#44474b" strokeWidth="1.2" strokeLinejoin="round" />
        </Icon>
      </button>
      <button type="button" aria-label="Zoom" className="ml-[10px]">
        <Icon size={22} box={22}>
          <circle cx="8" cy="10" r="6" fill="#e4f1ec" stroke="#55585c" strokeWidth="1.5" />
          <path d="M12 14L18 20" stroke="#333" strokeWidth="3" />
          <path d="M16 5H22M19 2V8M16 10H22" stroke="#44474b" />
        </Icon>
      </button>
      <button type="button" aria-label="Fit" className="ml-[11px] flex items-center gap-[5px]">
        <Icon size={22} box={22}>
          <rect x="1" y="1" width="20" height="20" stroke="#777" strokeDasharray="3 2" />
          <circle cx="10" cy="9" r="8" fill="#dff0ea" stroke="#55585c" strokeWidth="1.5" />
          <path d="M15 15L21 21" stroke="#333" strokeWidth="3" />
        </Icon>
        <Caret />
      </button>
      <button type="button" aria-label="Display settings" className="ml-[7px] flex items-center gap-[2px]">
        <Icon size={21} box={21}>
          <rect x="1" y="1" width="19" height="15" fill="#e2e6ec" stroke="#4b4e52" strokeWidth="1.5" />
          <rect x="4" y="4" width="13" height="9" fill="#86aadd" stroke="#4a6a9a" />
          <path d="M8 16V19H13V16M5 20H16" stroke="#4b4e52" strokeWidth="1.5" />
        </Icon>
        <Caret />
      </button>
      <button type="button" aria-label="Grid and snaps" className="ml-[8px] flex items-center gap-[3px]">
        <Icon size={20} box={20}>
          <rect x="1" y="1" width="18" height="18" fill="#fff" stroke="#44474b" strokeWidth="1.5" />
          <path d="M4 1V19M7 1V19M10 1V19M13 1V19M16 1V19M1 4H19M1 7H19M1 10H19M1 13H19M1 16H19" stroke="#74777b" />
        </Icon>
        <Caret />
      </button>
      <button type="button" aria-label="Viewports" className="ml-[8px] flex items-center gap-[4px]">
        <Icon size={20} box={20}>
          <g fill="#94b3e2" stroke="#44516b">
            <rect x="1" y="2" width="9" height="8" rx="1" />
            <rect x="10" y="2" width="9" height="8" rx="1" />
            <rect x="1" y="10" width="9" height="8" rx="1" />
            <rect x="10" y="10" width="9" height="8" rx="1" />
          </g>
        </Icon>
        <Caret />
      </button>
    </div>
  );
}

function BottomBar() {
  return (
    <div className="grid grid-cols-[375px_1fr_375px] items-end pb-[5px]">
      <div className="mb-px flex h-[30px] items-center border border-t-0 border-[#c4c4c4] bg-[#f1f1f1] pr-px pl-[30px]">
        <h2 className="font-['Roboto',sans-serif] text-[13px] text-[#6b6b6b]">COMMENTS</h2>
        <button type="button" aria-label="Expand comments" className="mr-2 ml-auto"><RoundToggle plus /></button>
        <Grip />
      </div>
      <div className="flex justify-center">
        <NavigationBar />
      </div>
      <button type="button" aria-label="Autodesk assistant" className="mr-2 mb-[6px] justify-self-end">
        <Icon size={18} box={18}>
          <circle cx="9" cy="9" r="9" fill="#111" />
          <path d="M3 13C5 6 9 4 12 8L14 12H10C8 10 7 11 6 13Z" fill="#fff" />
          <circle cx="10" cy="10" r="2" fill="#111" />
        </Icon>
      </button>
    </div>
  );
}

// --- Timeline ---

const playback = [
  { name: 'Go to beginning', path: 'M0 1H3V19H0ZM16 2V18L3 10Z' },
  { name: 'Step back', path: 'M11 3V17L0 10ZM13 6H16V14H13Z' },
  { name: 'Play', path: 'M0 0L15 10L0 20Z' },
  { name: 'Step forward', path: 'M0 6H3V14H0ZM5 3V17L16 10Z' },
  { name: 'Go to end', path: 'M0 2V18L13 10ZM13 1H16V19H13Z' },
];

function SketchFeature() {
  return (
    <Icon size={22} box={22}>
      <path d="M2 2H18V10M2 2V18H10" stroke="#55585c" strokeWidth="1.5" strokeDasharray="12 2" />
      <Dots points={[[2, 2], [18, 2], [2, 19]]} r={1} />
      <path d="M11 20L18 12L21 15L14 21Z" fill="#f5b54a" />
      <path d="M18 12L20 11L22 13L21 15Z" fill="#d9363e" />
      <path d="M10 21L11 19L13 21Z" fill="#444" />
    </Icon>
  );
}

function Timeline() {
  return (
    <footer className="flex h-[69px] items-start border-t border-b-2 border-t-[#cfcfcf] border-b-[#1c1c1c] pr-[18px] pl-[14px]">
      <div className="flex gap-[15px] pt-5">
        {playback.map(control => (
          <button key={control.name} type="button" aria-label={control.name}>
            <svg width="16" height="20" viewBox="0 0 16 20"><path d={control.path} fill="#484848" /></svg>
          </button>
        ))}
      </div>
      <div className="relative ml-7 flex gap-2 pt-[18px]">
        <button type="button" aria-label="Sketch1"><SketchFeature /></button>
        <button type="button" aria-label="Extrude1">
          <Icon size={22} box={22}>
            <path d="M1 5L5 1H16V14L12 18H1Z" fill="#4ba3e0" />
            <path d="M1 5L5 1H16L12 5Z" fill="#8ccaf2" />
            <path d="M12 5V18L16 14V1Z" fill="#2f83c4" />
            <path d="M1 20H13L16 17" stroke="#999" strokeWidth="1.5" />
            <path d="M20 4V18" stroke="#222" strokeWidth="1.5" />
            <path d="M18 5L20 1L22 5Z" fill="#222" />
          </Icon>
        </button>
        <button type="button" aria-label="Sketch2"><SketchFeature /></button>
        <svg width="96" height="42" viewBox="0 0 96 42" className="pointer-events-none absolute top-[11px] left-0" aria-hidden="true">
          <path d="M12 32V39H71V32M41 32V39" stroke="#c2c2c2" strokeWidth="2" fill="none" />
          <path d="M78 0H94V5L86 12L78 5Z" fill="#555" />
          <path d="M86 10V41" stroke="#555" strokeWidth="3" />
        </svg>
      </div>
      <button type="button" aria-label="Timeline settings" className="mt-5 ml-auto">
        <Icon size={20} box={20}>
          <circle cx="10" cy="10" r="5" stroke="#8f8f8f" strokeWidth="4" />
          <circle cx="10" cy="10" r="8" stroke="#8f8f8f" strokeWidth="3" strokeDasharray="3 3" />
        </Icon>
      </button>
    </footer>
  );
}

export default function App() {
  return (
    <div className="flex min-h-screen flex-col bg-[#f1f1f1] font-['Liberation_Sans',Arial,sans-serif]">
      <TitleBar />
      <DocumentBar />
      <Ribbon />
      <main className="relative flex flex-1 flex-col bg-white">
        <SketchCanvas />
        <div className="relative flex flex-1 flex-col pr-[10px] pl-[5px]">
          <div className="flex flex-1 justify-between pt-2">
            <BrowserPanel />
            <div className="-mr-1 flex flex-col items-end">
              <div className="pt-[5px] pr-3 pb-[26px]">
                <ViewCube />
              </div>
              <SketchPalette />
            </div>
          </div>
          <BottomBar />
        </div>
      </main>
      <Timeline />
    </div>
  );
}
